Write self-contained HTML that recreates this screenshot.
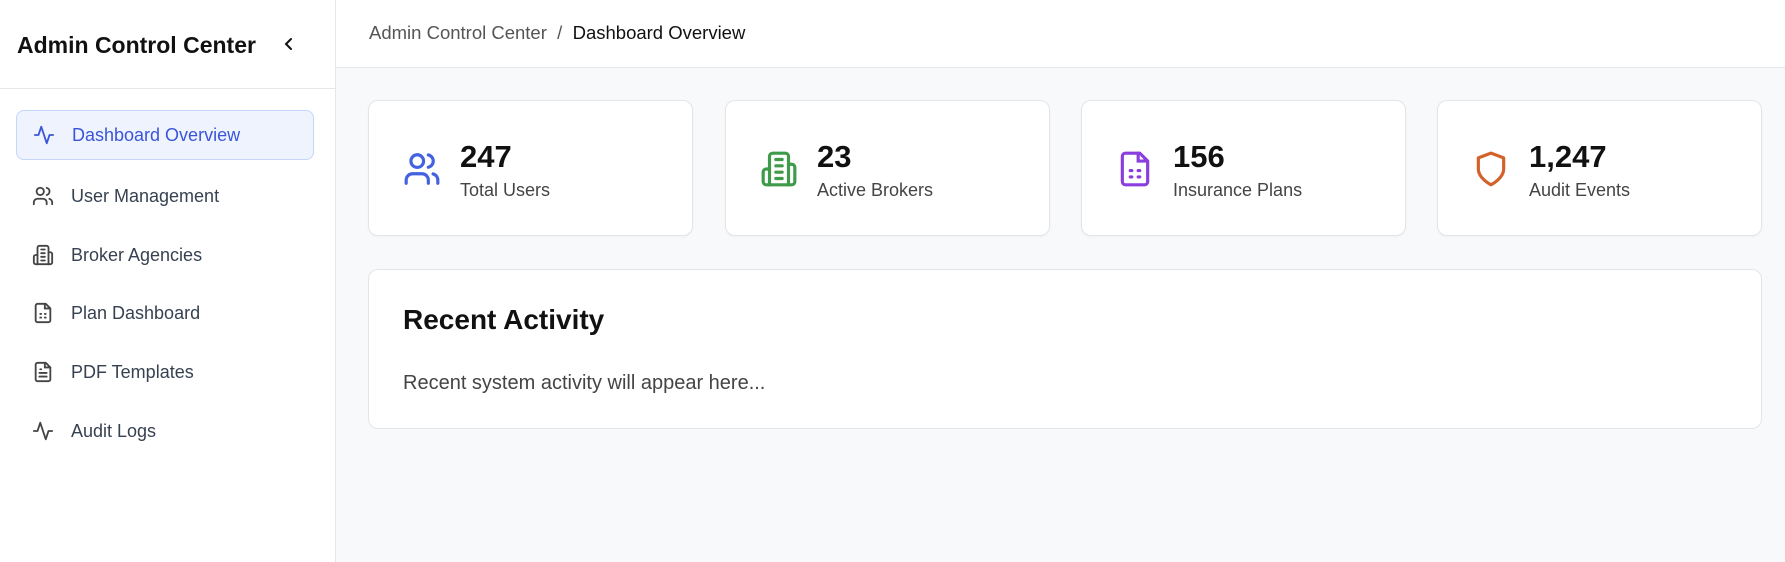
<!DOCTYPE html>
<html><head><meta charset="utf-8"><style>
*{box-sizing:border-box;margin:0;padding:0}
body{width:1785px;height:562px;overflow:hidden;font-family:"Liberation Sans",sans-serif;background:#f8f9fb;color:#111}
.sb{position:absolute;left:0;top:0;width:336px;height:562px;background:#fff;border-right:1px solid #e5e7eb}
.sbh{height:89px;border-bottom:1px solid #e5e7eb;position:relative}
.sbh h1{position:absolute;left:17px;top:32px;font-size:23px;font-weight:bold;color:#111}
.sbh .chev{position:absolute;left:282px;top:36px}
.nav{position:absolute;left:16px;width:298px;height:50px;display:flex;align-items:center;font-size:18px;color:#374151;border-radius:8px}
.nav svg{position:absolute;left:16px}
.nav span{position:absolute;left:55px}
.nav.act{background:#eef3fe;border:1px solid #c6d5fb;color:#3b55d9}
.hd{position:absolute;left:336px;top:0;right:0;height:68px;background:#fff;border-bottom:1px solid #e5e7eb;font-size:18.5px;padding:22px 0 0 33px;color:#555}
.hd b{font-weight:normal;color:#111}
.card{position:absolute;top:100px;width:325px;height:136px;background:#fff;border:1px solid #e3e5e8;border-radius:10px;box-shadow:0 1px 2px rgba(0,0,0,.04)}
.card svg{position:absolute;left:34px;top:49px}
.card .n{position:absolute;left:91px;top:38px;font-size:31px;font-weight:bold}
.card .l{position:absolute;left:91px;top:79px;font-size:18px;color:#444}
.ra{position:absolute;left:368px;top:269px;width:1394px;height:160px;background:#fff;border:1px solid #e3e5e8;border-radius:10px}
.ra h2{position:absolute;left:34px;top:34px;font-size:28px;font-weight:bold}
.ra p{position:absolute;left:34px;top:102px;font-size:20px;color:#444}
</style></head><body>
<div class="sb">
<div class="sbh"><h1>Admin Control Center</h1>
<svg class="chev" width="14" height="16" viewBox="0 0 14 16"><path d="M9 3L4 8l5 5" fill="none" stroke="#111" stroke-width="2" stroke-linecap="round"/></svg></div>
<div class="nav act" style="top:110px"><svg width="22" height="22" viewBox="0 0 24 24" fill="none" stroke="#3b55d9" stroke-width="2" stroke-linecap="round" stroke-linejoin="round"><path d="M22 12h-4l-3 9L9 3l-3 9H2"/></svg><span>Dashboard Overview</span></div>
<div class="nav" style="top:171px"><svg width="22" height="22" viewBox="0 0 24 24" fill="none" stroke="#444" stroke-width="2" stroke-linecap="round"><path d="M16 21v-2a4 4 0 0 0-4-4H6a4 4 0 0 0-4 4v2"/><circle cx="9" cy="7" r="4"/><path d="M22 21v-2a4 4 0 0 0-3-3.9M16 3.1a4 4 0 0 1 0 7.8"/></svg><span>User Management</span></div>
<div class="nav" style="top:230px"><svg width="22" height="22" viewBox="0 0 24 24" fill="none" stroke="#444" stroke-width="2" stroke-linecap="round"><path d="M6 22V4a2 2 0 0 1 2-2h8a2 2 0 0 1 2 2v18z"/><path d="M6 12H4a2 2 0 0 0-2 2v6a2 2 0 0 0 2 2h2M18 9h2a2 2 0 0 1 2 2v9a2 2 0 0 1-2 2h-2M10 6h4M10 10h4M10 14h4M10 18h4"/></svg><span>Broker Agencies</span></div>
<div class="nav" style="top:288px"><svg width="22" height="22" viewBox="0 0 24 24" fill="none" stroke="#444" stroke-width="2" stroke-linecap="round"><path d="M15 2H6a2 2 0 0 0-2 2v16a2 2 0 0 0 2 2h12a2 2 0 0 0 2-2V7z"/><path d="M14 2v5h5M9 13h1M14 13h1M9 17h1M14 17h1"/></svg><span>Plan Dashboard</span></div>
<div class="nav" style="top:347px"><svg width="22" height="22" viewBox="0 0 24 24" fill="none" stroke="#444" stroke-width="2" stroke-linecap="round"><path d="M15 2H6a2 2 0 0 0-2 2v16a2 2 0 0 0 2 2h12a2 2 0 0 0 2-2V7z"/><path d="M14 2v5h5M9 9h1M8 13h8M8 17h8"/></svg><span>PDF Templates</span></div>
<div class="nav" style="top:406px"><svg width="22" height="22" viewBox="0 0 24 24" fill="none" stroke="#444" stroke-width="2" stroke-linecap="round" stroke-linejoin="round"><path d="M22 12h-4l-3 9L9 3l-3 9H2"/></svg><span>Audit Logs</span></div>
</div>
<div class="hd">Admin Control Center &nbsp;/&nbsp; <b>Dashboard Overview</b></div>
<div class="card" style="left:368px"><svg width="38" height="38" viewBox="0 0 24 24" fill="none" stroke="#4361e0" stroke-width="2" stroke-linecap="round"><path d="M16 21v-2a4 4 0 0 0-4-4H6a4 4 0 0 0-4 4v2"/><circle cx="9" cy="7" r="4"/><path d="M22 21v-2a4 4 0 0 0-3-3.9M16 3.1a4 4 0 0 1 0 7.8"/></svg><div class="n">247</div><div class="l">Total Users</div></div>
<div class="card" style="left:725px"><svg width="38" height="38" viewBox="0 0 24 24" fill="none" stroke="#3f9a4a" stroke-width="2" stroke-linecap="round"><path d="M6 22V4a2 2 0 0 1 2-2h8a2 2 0 0 1 2 2v18z"/><path d="M6 12H4a2 2 0 0 0-2 2v6a2 2 0 0 0 2 2h2M18 9h2a2 2 0 0 1 2 2v9a2 2 0 0 1-2 2h-2M10 6h4M10 10h4M10 14h4M10 18h4"/></svg><div class="n">23</div><div class="l">Active Brokers</div></div>
<div class="card" style="left:1081px"><svg width="38" height="38" viewBox="0 0 24 24" fill="none" stroke="#8b3ee0" stroke-width="2" stroke-linecap="round"><path d="M15 2H6a2 2 0 0 0-2 2v16a2 2 0 0 0 2 2h12a2 2 0 0 0 2-2V7z"/><path d="M14 2v5h5M9 13h1M14 13h1M9 17h1M14 17h1"/></svg><div class="n">156</div><div class="l">Insurance Plans</div></div>
<div class="card" style="left:1437px"><svg width="38" height="38" viewBox="0 0 24 24" fill="none" stroke="#d2622a" stroke-width="2" stroke-linejoin="round"><path d="M12 22s8-4 8-10V5l-8-3-8 3v7c0 6 8 10 8 10z"/></svg><div class="n">1,247</div><div class="l">Audit Events</div></div>
<div class="ra"><h2>Recent Activity</h2><p>Recent system activity will appear here...</p></div>
</body></html>
